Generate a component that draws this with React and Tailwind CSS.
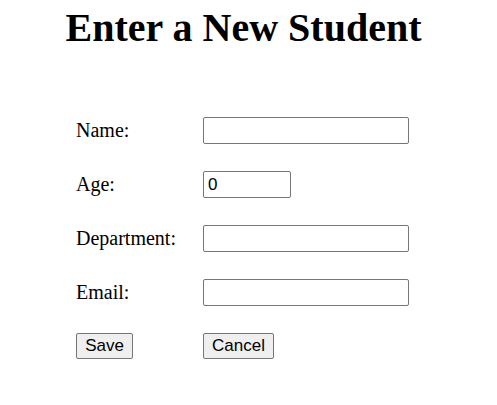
export default function App() {
  const rows = [
    { label: "Name:", w: "w-[206px]", v: "" },
    { label: "Age:", w: "w-[88px]", v: "0" },
    { label: "Department:", w: "w-[206px]", v: "" },
    { label: "Email:", w: "w-[206px]", v: "" },
  ];
  return (
    <div className="w-[497px] h-[405px] bg-white text-black font-['Liberation_Serif',serif]">
      <h1 className="w-[487px] pt-[5px] text-center text-[40px] leading-[46px] font-bold">
        Enter a New Student
      </h1>
      <div className="mt-[66px] pl-[76px] grid grid-cols-[127px_auto] gap-y-[27px] items-center">
        {rows.map((r) => (
          <div key={r.label} className="contents">
            <div className="text-[20px] leading-[23px]">{r.label}</div>
            <div>
              <input
                readOnly
                value={r.v}
                className={`${r.w} h-[27px] border border-[#767676] rounded-[2px] bg-white px-[4px] text-[17px] text-black font-['Liberation_Sans',sans-serif] outline-none block`}
              />
            </div>
          </div>
        ))}
        <div>
          <button className="w-[57px] h-[26px] border border-[#767676] rounded-[2px] bg-[#efefef] text-[17px] leading-[20px] text-black font-['Liberation_Sans',sans-serif] block">
            Save
          </button>
        </div>
        <div>
          <button className="w-[71px] h-[26px] border border-[#767676] rounded-[2px] bg-[#efefef] text-[17px] leading-[20px] text-black font-['Liberation_Sans',sans-serif] block">
            Cancel
          </button>
        </div>
      </div>
    </div>
  );
}
